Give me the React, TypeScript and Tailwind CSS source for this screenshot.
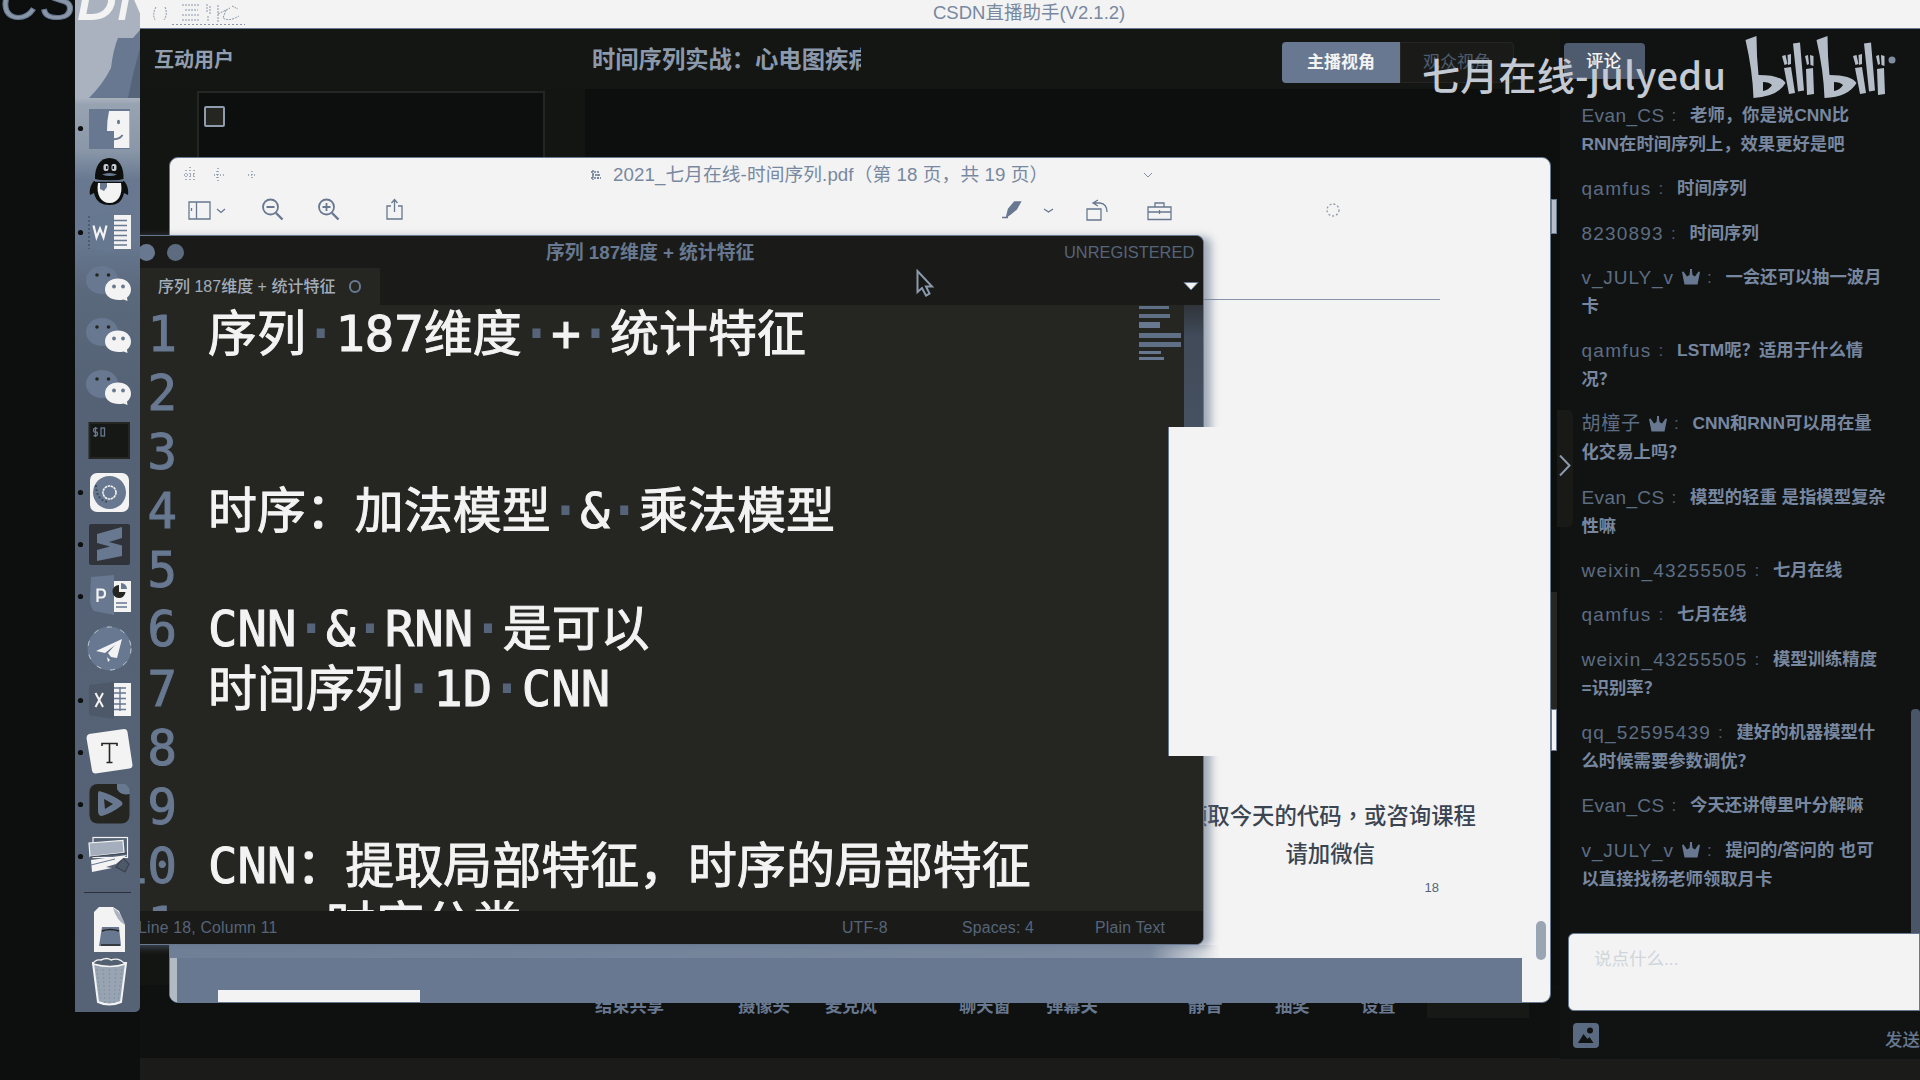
import type { ReactNode } from "react";

const CJK = "font-['Liberation_Sans','Noto_Sans_CJK_SC',sans-serif]";

/* ---------- Dock ---------- */

const WeChat = () => (
  <g>
    <ellipse cx="27" cy="21" rx="16" ry="14" fill="#677890" />
    <circle cx="22" cy="16" r="1.8" fill="#252622" />
    <circle cx="33.5" cy="16" r="1.8" fill="#252622" />
    <path d="M43 19.500c7.500 0 13 4.600 13 11 0 3.600-1.500 6-4 8l.5 3.500-4-1.500c-9 2-18.500-2-18.500-10C30 24.100 35.500 19.500 43 19.500z" fill="#f3f3f3" />
    <ellipse cx="39" cy="27.500" rx="1.900" ry="2.100" fill="#677890" />
    <ellipse cx="48" cy="27.500" rx="1.900" ry="2.100" fill="#677890" />
  </g>
);

const dockItems: { dot?: boolean; art: ReactNode }[] = [
  {
    dot: true,
    art: (
      <g>
        <rect x="14" y="6" width="41" height="40" fill="#677890" />
        <path d="M34 8h20.500v37H39V28h-7q0-11 2-20z" fill="#f3f3f3" />
        <ellipse cx="43.500" cy="19" rx="1.500" ry="2.300" fill="#677890" />
        <path d="M37 36q7 1 10.500-4" stroke="#677890" strokeWidth="2" fill="none" />
      </g>
    ),
  },
  {
    art: (
      <g>
        <path d="M20 24c-.5-12 5-21 14.500-21S49 12 48.500 24q-13 4-28.500 0z" fill="#0d0f0e" />
        <path d="M19 26c-3 3-5 9-4 14l4-2c2 9 8 12 15.500 12S47 47 49 38l4 2c1-5-1-11-4-14z" fill="#0d0f0e" />
        <path d="M23 28h23c2 12-3 20-11.500 20S21 40 23 28z" fill="#f3f3f3" />
        <path d="M20 26h28" stroke="#677890" strokeWidth="1.500" />
        <path d="M25 28h7v4l-3 4-4-2z" fill="#677890" />
        <rect x="28.500" y="9" width="5" height="7" rx="2" fill="#c5ccd4" />
        <rect x="36.500" y="9" width="5" height="7" rx="2" fill="#c5ccd4" />
        <rect x="31" y="11" width="1.500" height="3" fill="#0d0f0e" />
        <rect x="37.500" y="11" width="1.500" height="3" fill="#0d0f0e" />
        <path d="M27 19.500q7-3 15 0-7 3-15 0z" fill="#677890" />
      </g>
    ),
  },
  {
    dot: true,
    art: (
      <g>
        <path d="M14 10l25-4v40l-25-5z" fill="#667790" />
        <path d="M14 9v33" stroke="#3b4048" strokeDasharray="2 2" />
        <rect x="39" y="8" width="17" height="34" fill="#f3f3f3" />
        <path d="M39 13.500h13M39 18.500h13M39 23.500h13M39 28.500h13M39 33.500h13M39 38h13" stroke="#677890" strokeWidth="1.400" />
        <path d="M18.500 18.500l3 12 3.500-9 3.500 9 3-12" stroke="#f3f3f3" strokeWidth="2.200" fill="none" />
      </g>
    ),
  },
  { art: <WeChat /> },
  { art: <WeChat /> },
  { art: <WeChat /> },
  {
    art: (
      <g>
        <rect x="14.500" y="8" width="39.500" height="35" fill="#161815" stroke="#252622" strokeWidth="2" />
        <path d="M22.500 13.500q-4-1-4 1.500t2 2 2 2-4 1.500M20.500 12v10" stroke="#677890" strokeWidth="1.300" fill="none" />
        <rect x="26" y="13" width="3.500" height="8" fill="none" stroke="#677890" strokeWidth="1.300" />
      </g>
    ),
  },
  {
    dot: true,
    art: (
      <g>
        <rect x="15" y="6" width="39" height="39" rx="7" fill="#f3f3f3" />
        <circle cx="34.500" cy="25.500" r="16.500" fill="#677890" />
        <path d="M21 18q0 14 11 17" stroke="#3f4a58" strokeWidth="2" strokeDasharray="2 2" fill="none" />
        <circle cx="34.500" cy="25.500" r="6.500" fill="none" stroke="#f3f3f3" strokeWidth="1.600" strokeDasharray="2.500 .6" />
      </g>
    ),
  },
  {
    dot: true,
    art: (
      <g>
        <rect x="14" y="5" width="41" height="41" rx="2" fill="#30343a" />
        <path d="M22 15l25-7v11l-13 4 13 3.500V37L22 42V31l13-3.500L22 24z" fill="#677890" />
      </g>
    ),
  },
  {
    dot: true,
    art: (
      <g>
        <path d="M16 6l23-2v40l-20-4q-4-4-4-12z" fill="#677890" />
        <rect x="39" y="10" width="17" height="31" fill="#f3f3f3" />
        <path d="M44 14a6.500 6.500 0 1 0 6.500 7H44z" fill="#252622" />
        <path d="M46 12a6 6 0 0 1 6 6h-6z" fill="#677890" />
        <path d="M41 32h11M41 36h11" stroke="#677890" strokeWidth="1.400" />
        <path d="M22.500 31V18.500h4q3.500 0 3.500 4t-3.500 4h-4" stroke="#f3f3f3" strokeWidth="2.200" fill="none" />
      </g>
    ),
  },
  {
    art: (
      <g>
        <circle cx="34.500" cy="25.500" r="22" fill="#677890" />
        <circle cx="34.500" cy="25.500" r="21.500" fill="none" stroke="#c5ccd4" strokeWidth="1" strokeDasharray="5 9" />
        <path d="M21 28l26-12-5 19-6-1-3-4 7-8-10 8z" fill="#f3f3f3" />
        <path d="M32 34l3 3-2 2z" fill="#f3f3f3" />
      </g>
    ),
  },
  {
    dot: true,
    art: (
      <g>
        <path d="M14 10l25-3v37l-25-4z" fill="#4d5868" />
        <rect x="39" y="8" width="17" height="33" fill="#f3f3f3" />
        <path d="M39 13h12M39 18h12M39 23.500h12M39 29h12M39 34.500h12M45 12v24" stroke="#677890" strokeWidth="1.400" />
        <path d="M20.500 18l7.500 14M28 18l-7.500 14" stroke="#f3f3f3" strokeWidth="2" />
      </g>
    ),
  },
  {
    dot: true,
    art: (
      <g>
        <path d="M14 7l35-5q3 0 3.500 3l5 33q0 3-3 3.500l-34 5q-3 0-3.500-3L11.500 11q0-3 2.500-4z" fill="#f3f3f3" />
        <path d="M27 19v-2.500h15V19M34.500 16.500v18.500M31.500 35.500h6" stroke="#252622" strokeWidth="1.600" fill="none" />
      </g>
    ),
  },
  {
    dot: true,
    art: (
      <g>
        <rect x="14.500" y="5" width="40" height="39.500" rx="8" fill="#252622" />
        <path d="M42 5h8q5 2 5 10-10 2-13-5z" fill="#677890" />
        <path d="M24 12q12 3 22 10 3 3 0 5-9 7-19 10-4 0-4-5V15q0-2 1-3z" fill="#677890" />
        <path d="M29 20l9 5-8 5z" fill="#252622" />
      </g>
    ),
  },
  {
    dot: true,
    art: (
      <g>
        <rect x="18" y="6.500" width="34.500" height="20" fill="none" stroke="#f3f3f3" strokeWidth="1.200" />
        <path d="M14 12l34-2.500 1 12-34 4z" fill="#a4aebc" stroke="#f3f3f3" strokeWidth="1.200" />
        <path d="M15 26l37-4M48 27l6 6-4 8-9-5z" stroke="#3a424d" strokeWidth="1.200" fill="#4d5868" />
        <path d="M16 29l36-5-11 9-10 3 6 1-20 4z" fill="#f3f3f3" />
        <path d="M16 34l24-6" stroke="#677890" />
      </g>
    ),
  },
];

const Dock = () => (
  <div className="absolute left-[75px] top-0 flex h-[1012px] w-[65px] flex-col overflow-hidden rounded-br-[5px] bg-[linear-gradient(180deg,#a9b2be_0px,#a9b2be_98px,#98a3b2_104px,#8a97a8_150px,#677890_180px,#677890_240px,#5b697d_290px,#556275_400px,#566376_1012px)]">
    <svg className="h-[103px] w-[65px] shrink-0" viewBox="0 0 65 103">
      <path d="M65 30L58 38H43Q38 50 36 68 28 84 14 98H65z" fill="#677890" />
      <path d="M65 48Q58 72 53 98h12z" fill="#56647a" />
    </svg>
    {dockItems.map((item, i) => (
      <svg key={i} className="h-[52px] w-[65px] shrink-0" viewBox="0 0 65 52">
        {item.dot && <circle cx="5.500" cy="25.500" r="2.600" fill="#0d0f0e" />}
        {item.art}
      </svg>
    ))}
    <div className="mx-[9px] mb-[10px] mt-[9px] h-px shrink-0 bg-[#2c3036]" />
    <svg className="h-[52px] w-[65px] shrink-0" viewBox="0 0 65 52">
      <path d="M19 49V9l5-5h14l6 4 6 14v27z" fill="#f3f3f3" />
      <path d="M38 5q8 4 12 17-8-4-12-17z" fill="#aab3bf" />
      <path d="M27 24h17l2 19H24z" fill="#677890" />
      <path d="M26 42h19M27 28q8-3 17 0" stroke="#252622" strokeWidth="1.500" fill="none" />
    </svg>
    <svg className="h-[52px] w-[65px] shrink-0" viewBox="0 0 65 52">
      <path d="M18 8h33l-5 39q-12 5-23 0z" fill="#99a4b3" stroke="#f3f3f3" strokeWidth="2" />
      <path d="M22 14l4 32M28 14l2 34M34.500 14v34M41 14l-2 34M47 14l-4 32" stroke="#8493a7" strokeWidth="1.200" strokeDasharray="2 2" />
      <path d="M18 9q2-5 8-4 6-3 10 0 8-3 14 4-14 5-32 0z" fill="#52606f" stroke="#f3f3f3" strokeWidth="1.400" />
    </svg>
  </div>
);

/* ---------- Chat ---------- */

type Message = { name: string; track: string; crown?: boolean; lines: string[] };

const messages: Message[] = [
  { name: "Evan_CS", track: "tracking-[0.4px]", lines: ["老师，你是说CNN比", "RNN在时间序列上，效果更好是吧"] },
  { name: "qamfus", track: "tracking-[1.3px]", lines: ["时间序列"] },
  { name: "8230893", track: "tracking-[1.2px]", lines: ["时间序列"] },
  { name: "v_JULY_v", track: "tracking-[0.9px]", crown: true, lines: ["一会还可以抽一波月", "卡"] },
  { name: "qamfus", track: "tracking-[1.3px]", lines: ["LSTM呢？适用于什么情", "况？"] },
  { name: "胡橦子", track: "tracking-[0.8px]", crown: true, lines: ["CNN和RNN可以用在量", "化交易上吗？"] },
  { name: "Evan_CS", track: "tracking-[0.4px]", lines: ["模型的轻重 是指模型复杂", "性嘛"] },
  { name: "weixin_43255505", track: "tracking-[1.2px]", lines: ["七月在线"] },
  { name: "qamfus", track: "tracking-[1.3px]", lines: ["七月在线"] },
  { name: "weixin_43255505", track: "tracking-[1.2px]", lines: ["模型训练精度", "=识别率？"] },
  { name: "qq_52595439", track: "tracking-[1.2px]", lines: ["建好的机器模型什", "么时候需要参数调优？"] },
  { name: "Evan_CS", track: "tracking-[0.4px]", lines: ["今天还讲傅里叶分解嘛"] },
  { name: "v_JULY_v", track: "tracking-[0.9px]", crown: true, lines: ["提问的/答问的 也可", "以直接找杨老师领取月卡"] },
];

const Crown = () => (
  <svg className="ml-[8px] h-[16px] w-[18px]" viewBox="0 0 18 16">
    <path d="M0 3l1.500-.5L5 7.500 7.500 6 8 2V0h2v2l.5 4L13 7.500l3.500-5L18 3l-2.500 12.500h-13z" fill="#677890" />
  </svg>
);

const Chat = () => (
  <div className="flex w-[360px] shrink-0 flex-col bg-[#111312]">
    <div className="flex h-[72px] shrink-0 items-start">
      <div className="ml-[4px] mt-[14px] flex h-[36px] w-[81px] items-center justify-center rounded-[4px] bg-[#4e5b6e] pr-[2px] text-[17.500px] font-medium text-[#f3f3f3]">
        评论
      </div>
    </div>
    <div className="flex h-[832px] shrink-0">
      <div className="flex w-[351px] flex-col gap-[15.300px] pl-[21.500px]">
        {messages.map((m, i) => (
          <div key={i} className="flex flex-col whitespace-nowrap leading-[29px]">
            <div className="flex items-center">
              <span className={`${m.track} relative text-[19px] text-[#5d6d83]`}>{m.name}</span>
              {m.crown && <Crown />}
              <span className="relative ml-[7px] w-[18.500px] text-[17px] text-[#505e70]">:</span>
              <span className="text-[17.350px] font-bold text-[#7787a0]">{m.lines[0]}</span>
            </div>
            {m.lines[1] && <span className="text-[17.350px] font-bold text-[#7787a0]">{m.lines[1]}</span>}
          </div>
        ))}
      </div>
      <div className="mt-[608px] h-[224px] w-[9px] rounded-t-[4px] bg-[#4a5668]" />
    </div>
    <div className="ml-[8px] h-[78px] shrink-0 rounded-l-[6px] border border-[#677890] bg-[#f3f3f3] pl-[25px] pt-[12px] text-[17.500px] leading-[26px] text-[#cfd5dc]">
      说点什么...
    </div>
    <div className="flex h-[48px] shrink-0 items-start justify-between pl-[13px] pt-[12px]">
      <svg className="h-[25px] w-[26px]" viewBox="0 0 26 25">
        <rect width="26" height="25" rx="4" fill="#5a6a80" />
        <path d="M5 20l5.500-9 4 5 2-2 4 6z" fill="#111312" />
        <circle cx="17" cy="7.500" r="3" fill="#111312" />
      </svg>
      <span className="mt-[4px] text-[17.500px] font-medium leading-[26px] text-[#677890]">发送</span>
    </div>
    <div className="flex-1 bg-[#1b1c19]" />
  </div>
);

/* ---------- Live streaming assistant window ---------- */

const AppWindow = () => (
  <div className="absolute left-[140px] top-0 flex h-[1080px] w-[1780px] flex-col bg-[#0d0f0e]">
    <div className="flex h-[29px] shrink-0 items-center border-b border-[#677890] bg-[#f3f3f3]">
      <svg className="ml-[12px] h-[24px] w-[94px]" viewBox="0 0 94 24" fill="none" stroke="#8997aa">
        <path d="M4 5q-4 7-1 13M13 5q3 7-1 13M30 3h17M33 8h13M30 13h17M30 18h17M55 2v8M58 4v9M56 14v5M66 3v17M66 12l12-6M74 8l-3 8q6 4 16-2M80 4l6 3" strokeDasharray="2 1" />
        <path d="M20 22.500h73" strokeDasharray="2 2" />
      </svg>
      <div className="relative top-[-1px] ml-[687px] text-[18.500px] leading-[26px] text-[#7888a0]">CSDN直播助手(V2.1.2)</div>
    </div>
    <div className="flex flex-1">
      <div className="flex w-[1420px] flex-col">
        <div className="flex h-[60px] shrink-0 items-start bg-[#141613]">
          <div className="ml-[14px] mt-[17px] w-[438px] text-[20px] font-bold leading-[28px] text-[#919eb0]">互动用户</div>
          <div className="mt-[16px] w-[269px] overflow-hidden whitespace-nowrap text-[23.300px] font-bold leading-[30px] text-[#8c99ab]">
            时间序列实战：心电图疾病
          </div>
          <div className="ml-[421px] mt-[13px] flex h-[41px] text-[17px]">
            <div className="flex w-[118px] items-center justify-center rounded-l-[4px] bg-[#677890] font-bold text-[#f3f3f3]">主播视角</div>
            <div className="flex w-[114px] items-center justify-center rounded-r-[4px] border border-[#252622] bg-[#1a1b18] text-[#4f5c6e]">
              观众视角
            </div>
          </div>
        </div>
        <div className="flex h-[907px]">
          <div className="w-[445px] bg-[#131512] pl-[57px] pt-[2px]">
            <div className="h-[880px] w-[348px] border-2 border-[#252622] bg-[#0d0f0e] pl-[5px] pt-[13px]">
              <div className="h-[21px] w-[21px] rounded-[2px] border-2 border-[#8f9cae] bg-[#252622]" />
            </div>
          </div>
        </div>
        <div className="mt-auto h-[22px] bg-[#1b1c19]" />
      </div>
      <Chat />
    </div>
  </div>
);

const bottomTools = [
  { label: "结束共享", w: "w-[143px]" },
  { label: "摄像头", w: "w-[87px]" },
  { label: "麦克风", w: "w-[134px]" },
  { label: "聊天窗", w: "w-[87px]" },
  { label: "弹幕关", w: "w-[142px]" },
  { label: "静音", w: "w-[87px]" },
  { label: "抽奖", w: "w-[86px]" },
  { label: "设置", w: "w-[66px]" },
];

const BottomBar = () => (
  <div className="absolute left-[140px] top-[985px] flex h-[73px] w-[1420px] items-start whitespace-nowrap bg-[#0f1110] pl-[455px] text-[17.300px] font-bold leading-[42px] text-[#677890]">
    {bottomTools.map((t) => (
      <span key={t.label} className={`${t.w} shrink-0`}>
        {t.label}
      </span>
    ))}
    <div className="h-[33px] w-[102px] bg-[#171916]" />
  </div>
);

/* ---------- PDF viewer window ---------- */

const PdfWindow = () => (
  <div className="absolute left-[169px] top-[157px] flex h-[846px] w-[1382px] flex-col overflow-hidden rounded-[9px] border border-[#677890] bg-[#f3f3f3]">
    <div className="flex h-[34px] shrink-0 items-center">
      <svg className="ml-[10px] h-[20px] w-[80px]" viewBox="0 0 80 20" stroke="#8c99ab" strokeDasharray="1 2" fill="none" strokeWidth="1.500">
        <path d="M10 2v15M6 5v10M14 5v10M4 10h12M38 3v14M34 10h12M37 6v8M68 10h9M72 6v8" />
      </svg>
      <svg className="ml-[330px] h-[12px] w-[12px]" viewBox="0 0 12 12" fill="none" stroke="#677890" strokeWidth="1.400">
        <path d="M1 3h9M2 6h9M1 9h10M3 1v10M8 5v6" strokeDasharray="2 1" />
      </svg>
      <div className="ml-[11px] w-[429px] whitespace-nowrap text-[18.700px] leading-[30px] tracking-[0.100px] text-[#7888a0]">
        2021_七月在线-时间序列.pdf（第 18 页，共 19 页）
      </div>
      <svg className="ml-[101px] h-[6px] w-[10px]" viewBox="0 0 10 6" fill="none" stroke="#8190a4">
        <path d="M1 1l4 4 4-4" />
      </svg>
    </div>
    <div className="flex h-[43px] shrink-0 items-start pt-[6px]">
      <svg className="h-[24px] w-[1180px]" viewBox="170 198 1180 24" fill="none" stroke="#677890" strokeWidth="1.300">
        <path d="M189 202h21v17h-21zM196.500 202v17M191.500 208v3M217 209l4 3.500 4-3.500" />
        <circle cx="270.500" cy="207" r="7.500" strokeWidth="1.800" />
        <path d="M276 213l6.500 6.500" strokeWidth="2.400" />
        <path d="M266.500 207h8" strokeWidth="1.800" />
        <circle cx="326.500" cy="207" r="7.500" strokeWidth="1.800" />
        <path d="M332 213l6.500 6.500" strokeWidth="2.400" />
        <path d="M322.500 207h8M326.500 203v8" strokeWidth="1.800" />
        <path d="M391 206h-4v13h15v-13h-4M394.500 212v-12M391.500 203l3-3.500 3 3.500" />
        <path d="M1020.500 202h-6l-6 7-2 8 4-3 6-5z" fill="#677890" />
        <path d="M1002 217.500h6M1044 209l4.500 3 4.500-3M1087 209h14v11h-14zM1094 203h6q7 1 7 9M1098 200l-5 3 5 3" />
        <path d="M1148 207h23v12.500h-23zM1155 207v-4h9v4M1148 212h23M1159.500 210v4" />
        <circle cx="1333" cy="210" r="6" strokeDasharray="2 2" stroke="#8c99ab" />
      </svg>
    </div>
    <div className="ml-[1033px] mt-[64px] h-px w-[237px] shrink-0 bg-[#8794a8]" />
    <div className="flex h-[645px] shrink-0 justify-end">
      <div className="flex w-[494px] flex-col text-[22.400px] font-medium leading-[38px] text-[#3b4552]">
        <div className="mt-[495px] w-[420px] whitespace-nowrap text-right">
          领取今天的代码<span className="font-['Noto_Sans_CJK_TC',sans-serif]">，</span>或咨询课程
        </div>
        <div className="w-[319px] whitespace-nowrap text-right">请加微信</div>
        <div className="mt-[5px] w-[383px] text-right text-[13px] leading-[18px] text-[#56647a]">18</div>
      </div>
      <div className="ml-[-14px] mr-[4px] mt-[621px] h-[39px] w-[10px] shrink-0 rounded-full bg-[#9aa5b4]" />
    </div>
    <div className="flex h-[57px] shrink-0 flex-col">
      <div className="h-[13px] w-[1050px] shrink-0 bg-[linear-gradient(90deg,#6f8097_0px,#7b8a9f_980px,#f3f3f300)]" />
      <div className="flex h-[44px] w-[1352px]">
        <div className="w-[7px] bg-[#b0b9c4]" />
        <div className="flex w-[1345px] items-end bg-[#677890] pl-[41px]">
          <div className="h-[12px] w-[202px] bg-[#f3f3f3]" />
        </div>
      </div>
    </div>
  </div>
);

/* ---------- Text editor window ---------- */

const editorLines = [
  "序列·187维度·+·统计特征",
  "",
  "",
  "时序：加法模型·&·乘法模型",
  "",
  "CNN·&·RNN·是可以",
  "时间序列·1D·CNN",
  "",
  "",
  "CNN：提取局部特征，时序的局部特征",
  "    时序分类",
];

const EditorLine = ({ text, n }: { text: string; n: number }) => (
  <div className="flex h-[59.100px] shrink-0 whitespace-pre">
    <span className="flex w-[59px] shrink-0 justify-end text-[#677890] [-webkit-text-stroke:1px_#677890]">{n}</span>
    <span className="ml-[31px]">
      {text.split("").map((c, i) => (
        <span key={i} className={c === "·" ? "text-[#56647a] [-webkit-text-stroke:2px_#56647a]" : "text-[#f3f3f3] [-webkit-text-stroke:1px_#f3f3f3]"}>
          {c}
        </span>
      ))}
    </span>
  </div>
);

const EditorWindow = () => (
  <div className="absolute left-[118px] top-[235px] flex h-[710px] w-[1086px] flex-col overflow-hidden rounded-r-[8px] border border-l-0 border-[#677890] bg-[#252622] shadow-[7px_2px_9px_#67789099]">
    <div className="flex h-[32px] shrink-0 items-center bg-[#1a1b18]">
      <span className="ml-[20px] h-[17px] w-[17px] rounded-full bg-[#677890]" />
      <span className="ml-[12px] h-[17px] w-[17px] rounded-full bg-[#5c6b80]" />
      <span className="relative top-px ml-[362px] w-[518px] whitespace-nowrap text-[18.800px] font-bold text-[#677890]">序列 187维度 + 统计特征</span>
      <span className="text-[16.400px] text-[#56647a]">UNREGISTERED</span>
    </div>
    <div className="flex h-[37px] shrink-0 bg-[#1a1b18]">
      <div className="flex w-[262px] items-center bg-[#252622] pl-[40px]">
        <span className="whitespace-nowrap text-[16px] font-medium text-[#a3adba]">序列 187维度 + 统计特征</span>
        <span className="ml-[14px] h-[13px] w-[12px] rounded-full border-2 border-[#677890]" />
      </div>
      <svg className="ml-auto mr-[4px] mt-[14px] h-[9px] w-[16px]" viewBox="0 0 16 9">
        <path d="M1 .5h14L8 8z" fill="#f3f3f3" stroke="#677890" />
      </svg>
    </div>
    <div className="flex h-[606px] shrink-0 overflow-hidden">
      <div className="flex w-[1022px] flex-col overflow-hidden font-['DejaVu_Sans_Mono','Noto_Sans_CJK_SC',monospace] text-[48.950px] leading-[59px]">
        {editorLines.map((t, i) => (
          <EditorLine key={i} text={t} n={i + 1} />
        ))}
      </div>
      <div className="flex w-[45px] flex-col items-start gap-[4px] pt-px">
        <span className="h-[3px] w-[30px] bg-[#5f6f85]" />
        <span className="mt-px h-[4px] w-[31px] bg-[#5f6f85]" />
        <span className="h-[6px] w-[21px] bg-[#677890]" />
        <span className="mt-px h-[5px] w-[42px] bg-[#5f6f85]" />
        <span className="h-[5px] w-[42px] bg-[#5f6f85]" />
        <span className="h-[3px] w-[22px] bg-[#677890]" />
        <span className="mt-[-1px] h-[3px] w-[25px] bg-[#677890]" />
      </div>
      <div className="h-[123px] w-[19px] shrink-0 bg-[linear-gradient(180deg,#30343a,#404a58_30px,#465162)]" />
    </div>
    <div className="flex h-[33px] shrink-0 items-center whitespace-nowrap bg-[#1a1b18] text-[15.800px] tracking-[0.200px] text-[#56647a]">
      <span className="ml-[20px] w-[704px]">Line 18, Column 11</span>
      <span className="w-[120px]">UTF-8</span>
      <span className="w-[133px]">Spaces: 4</span>
      <span>Plain Text</span>
    </div>
  </div>
);

/* ---------- Overlays ---------- */

const Bilibili = () => (
  <svg className="ml-[18px] h-[66px] w-[156px]" viewBox="1742 34 156 66" fill="#b5bdc8">
    {[0, 71].map((dx) => (
      <g key={dx} transform={`translate(${dx} 0)`}>
        <path fillRule="evenodd" d="M1744.500 40l11-4q0 20 2 39 22 0 27 8-8 14-32 15-1-28-8-58zM1762 82v9q6-1 9-6-3-3-9-3z" />
        <path d="M1792 43.500l7-1 4 48-6 1zM1783 68l7-1 4 26-6 1zM1805 69l7-1 1 26-7 1z" />
        <path d="M1781 56l3.500-1 2 9-3 1zM1786.500 55l3.500-1v10l-3 1zM1804 56l3-1 1 9-2 1zM1809 55l3.500 1v10l-3-1z" />
      </g>
    ))}
    <circle cx="1891" cy="60" r="3.500" fill="#7f8da1" />
  </svg>
);

export default function App() {
  return (
    <div className={`relative h-[1080px] w-[1920px] overflow-hidden bg-[#0d0f0e] ${CJK}`}>
      <AppWindow />
      <BottomBar />
      <div className="absolute left-[1551px] top-[199px] h-[35px] w-[6px] border border-[#677890] bg-[#b5bdc8]" />
      <div className="absolute left-[1551px] top-[592px] h-[117px] w-[6px] bg-[#252622]" />
      <div className="absolute left-[1551px] top-[709px] h-[42px] w-[6px] border border-[#677890] bg-[#f3f3f3]" />
      <div className="absolute left-[1557px] top-[410px] flex h-[117px] w-[16px] items-start rounded-r-[6px] bg-[#191a18] pt-[45px]">
        <svg className="ml-[2px] h-[21px] w-[12px]" viewBox="0 0 12 21" fill="none" stroke="#8b99ac" strokeWidth="2">
          <path d="M1 .5l9.500 10L1 20.500" />
        </svg>
      </div>
      <PdfWindow />
      <EditorWindow />
      <div className="absolute left-[1168px] top-[427px] h-[329px] w-[60px] border-l border-[#677890] bg-[#f3f3f3]" />
      <Dock />
      <div className="absolute left-0 top-[-30px] w-[140px] overflow-hidden whitespace-nowrap text-[53px] italic leading-[62px] tracking-[2px] text-[#8a97a9] [-webkit-text-stroke:1px_#677890]">
        CS<span className="text-[#f3f3f3] [-webkit-text-stroke:2px_#f3f3f3]">DN</span>
      </div>
      <svg className="absolute left-[916px] top-[269px] h-[28px] w-[19px]" viewBox="0 0 19 28">
        <path d="M1.500 2v21l4.500-4 4 7.500 3.500-2-3.500-7h6z" fill="#161815" stroke="#8b99ac" strokeWidth="2" />
      </svg>
      <div className="absolute left-[1422px] top-[34px] flex items-start">
        <span className="mt-[15px] w-[303px] whitespace-nowrap font-['Noto_Sans_CJK_SC',sans-serif] text-[38px] font-medium leading-[50px] tracking-[0.280px] text-[#c3cad3]">
          七月在线-julyedu
        </span>
        <Bilibili />
      </div>
    </div>
  );
}
